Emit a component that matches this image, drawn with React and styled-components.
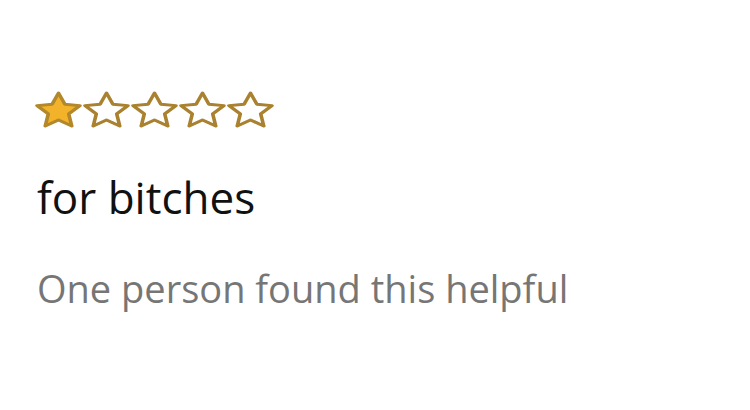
import React from 'react';
import styled, { createGlobalStyle } from 'styled-components';

const GlobalStyle = createGlobalStyle`
  html, body {
    margin: 0;
    padding: 0;
    background: #ffffff;
  }
  body {
    font-family: "Open Sans", "Noto Sans", Arial, sans-serif;
  }
`;

const Review = styled.div`
  width: 750px;
  height: 410px;
  box-sizing: border-box;
  padding: 93px 0 0 37px;
  display: flex;
  flex-direction: column;
`;

const Stars = styled.div`
  display: flex;
  gap: 5px;

  svg {
    overflow: visible;
  }
`;

const Title = styled.div`
  margin-top: 45px;
  font-size: 44px;
  line-height: 52px;
  color: #111111;
`;

const Helpful = styled.div`
  margin-top: 42px;
  font-size: 38px;
  line-height: 46px;
  color: #767676;
`;

const STAR = '12,2.3 14.94,8.755 21.99,9.555 16.755,14.345 18.17,21.3 12,17.8 5.83,21.3 7.245,14.345 2.01,9.555 9.06,8.755';

const Star = ({ filled }) => (
  <svg width="43" height="33" viewBox="2 2.3 20 19" preserveAspectRatio="none">
    <polygon
      points={STAR}
      fill={filled ? '#f2b32a' : '#ffffff'}
      stroke={filled ? '#b3872c' : '#a9812f'}
      strokeWidth="1.7"
      strokeLinejoin="round"
    />
  </svg>
);

export default function App() {
  return (
    <>
      <GlobalStyle />
      <Review>
        <Stars>
          {[1, 2, 3, 4, 5].map(i => <Star key={i} filled={i <= 1} />)}
        </Stars>
        <Title>for bitches</Title>
        <Helpful>One person found this helpful</Helpful>
      </Review>
    </>
  );
}
